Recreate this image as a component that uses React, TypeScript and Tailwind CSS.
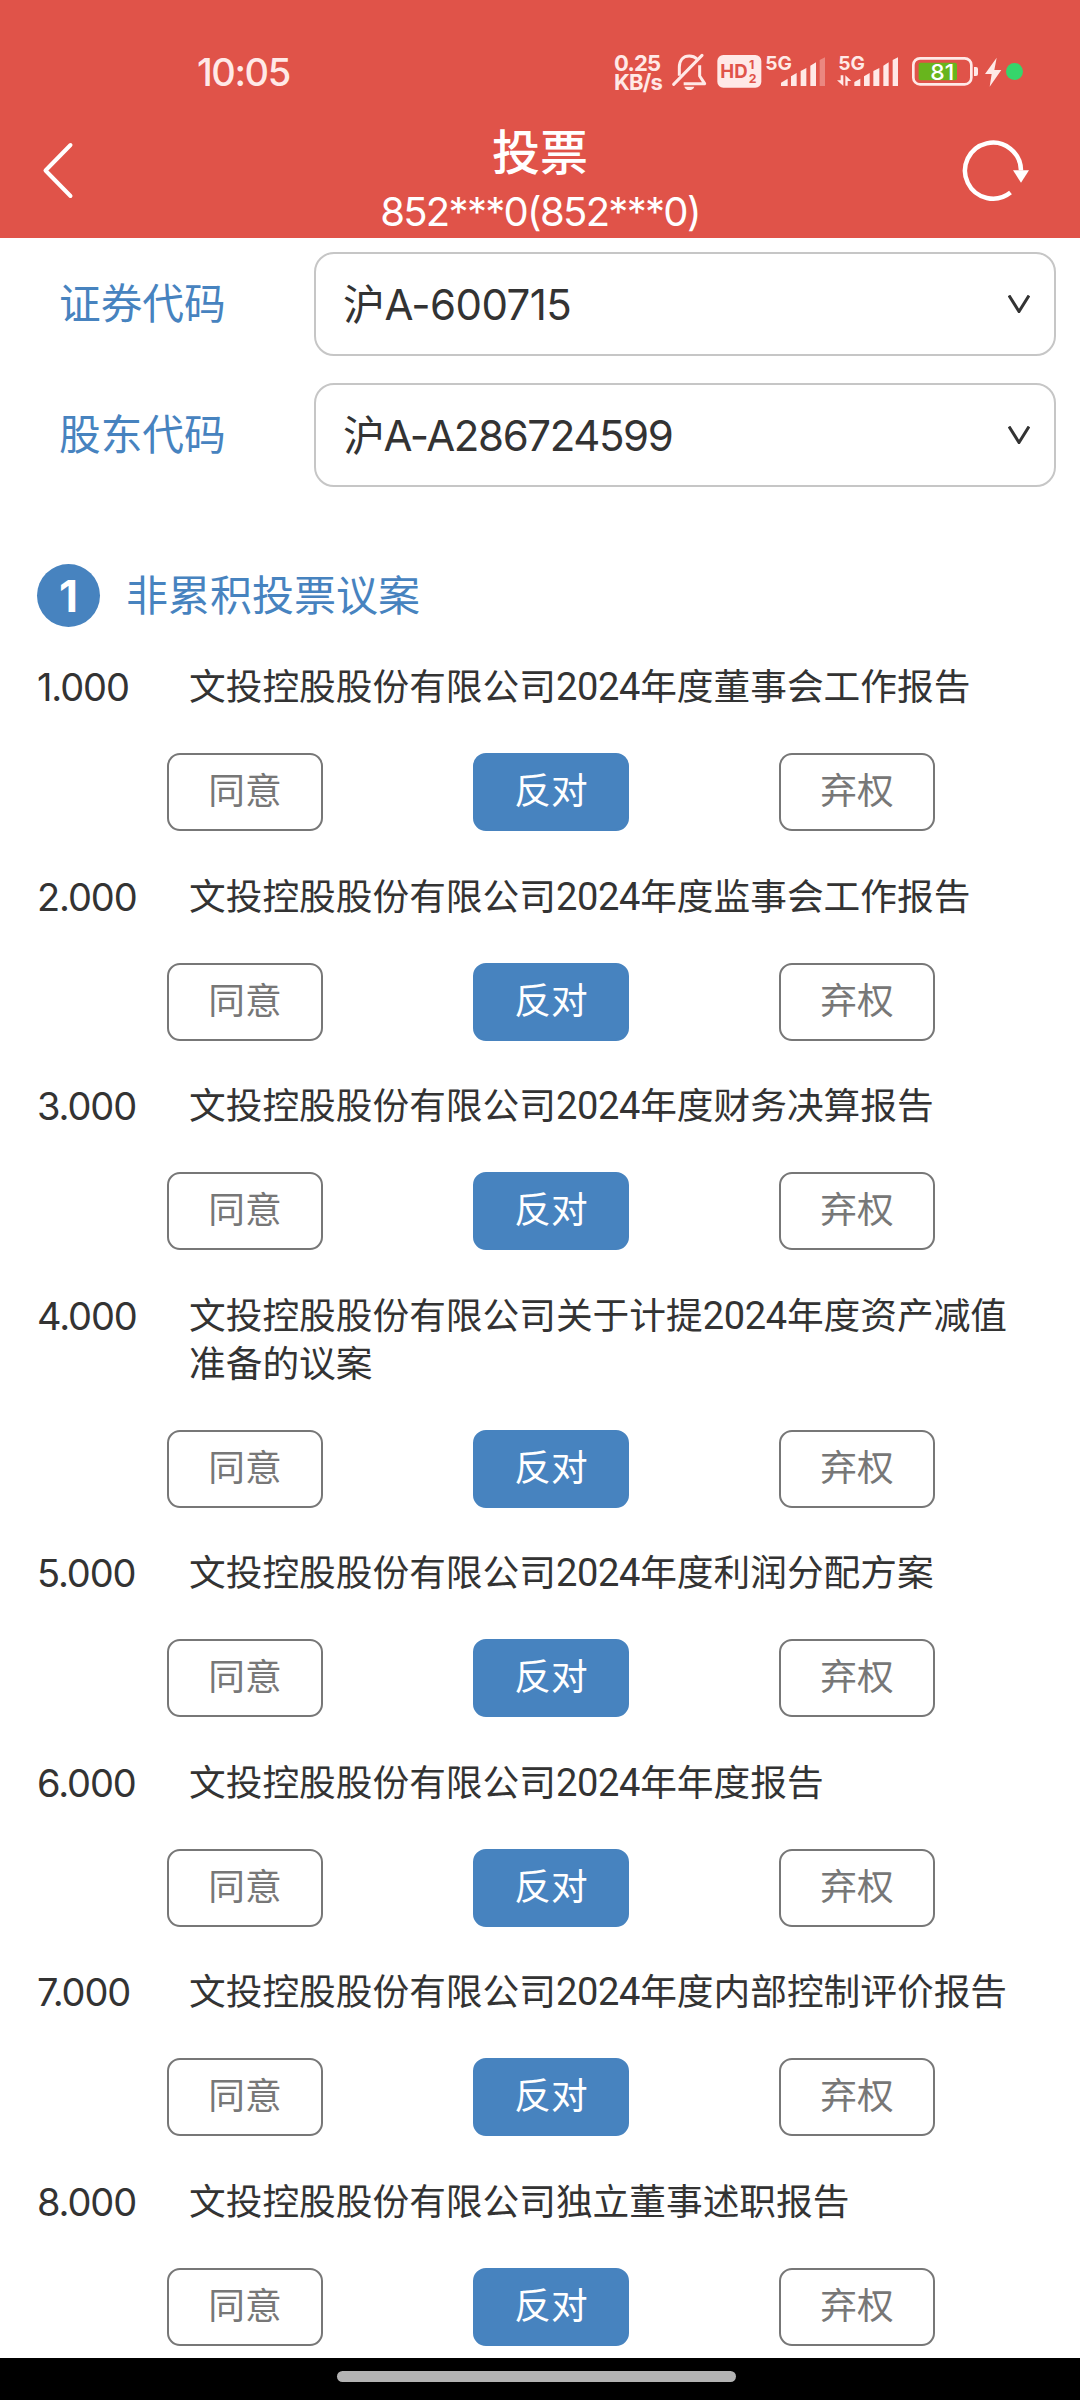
import { useState } from 'react'
import clsx from 'clsx'

type Vote = '同意' | '反对' | '弃权'

interface Proposal {
  id: string
  title: string
}

const options: Vote[] = ['同意', '反对', '弃权']

const proposals: Proposal[] = [
  { id: '1.000', title: '文投控股股份有限公司2024年度董事会工作报告' },
  { id: '2.000', title: '文投控股股份有限公司2024年度监事会工作报告' },
  { id: '3.000', title: '文投控股股份有限公司2024年度财务决算报告' },
  { id: '4.000', title: '文投控股股份有限公司关于计提2024年度资产减值准备的议案' },
  { id: '5.000', title: '文投控股股份有限公司2024年度利润分配方案' },
  { id: '6.000', title: '文投控股股份有限公司2024年年度报告' },
  { id: '7.000', title: '文投控股股份有限公司2024年度内部控制评价报告' },
  { id: '8.000', title: '文投控股股份有限公司独立董事述职报告' },
]

const StatusBar = () => (
  <div className="flex h-[112px] items-start pl-[197px] pr-[57px] pt-[52px] text-[#ffe9e7]">
    <span className="text-[38px] font-medium leading-[40px] tracking-[-1.4px]">10:05</span>
    <div className="ml-auto flex h-10 items-start">
      <div className="mr-[9px] w-[49px] whitespace-nowrap pt-[2px] text-[22px] font-bold leading-[19px] tracking-[-0.8px]">
        <div>0.25</div>
        <div>KB/s</div>
      </div>

      {/* Muted bell */}
      <svg className="h-10 w-[36px]" viewBox="213 36 108 120" fill="none" stroke="currentColor" strokeWidth="9">
        <path d="M235 107V82c0-22 12-34 30-34 10 0 18 4 23 9M296 76v32l15 23h-63" strokeLinejoin="round" />
        <path d="M218 133l85-87" strokeLinecap="round" />
        <path d="M250 140h30c-2 7-8 10-15 10s-13-3-15-10z" fill="currentColor" stroke="none" />
      </svg>

      {/* HD badge */}
      <svg className="ml-[9px] h-10 w-[46px]" viewBox="349 36 138 120">
        <rect x="350" y="45" width="132" height="98" rx="18" fill="currentColor" />
        <g fill="#e05349" fontWeight="700">
          <text x="359" y="114" fontSize="56" textLength="82" lengthAdjust="spacingAndGlyphs">HD</text>
          <text x="445" y="88" fontSize="37">1</text>
          <text x="444" y="129" fontSize="37">2</text>
        </g>
      </svg>

      {/* SIM 1 */}
      <svg className="h-10 w-[63px]" viewBox="489 36 189 120" fill="currentColor">
        <text x="496" y="90" fontSize="56" fontWeight="700" textLength="80" lengthAdjust="spacingAndGlyphs">5G</text>
        <path d="M543 138v-10l20-12v22zM573 138v-29l17-10v39zM602 138V93l17-9v54zM631 138V77l17-10v71z" />
        <path d="M659 138V60l16-8v86z" opacity=".35" />
      </svg>

      {/* SIM 2 */}
      <svg className="ml-[10px] h-10 w-[64px]" viewBox="708 36 192 120" fill="currentColor">
        <text x="715" y="90" fontSize="56" fontWeight="700" textLength="80" lengthAdjust="spacingAndGlyphs">5G</text>
        <path d="M722 106h8v32l-19-17h11zM736 106l18 17h-11v14h-7z" />
        <path d="M763 138v-12l18-10v22zM792 138v-29l17-10v39zM820 138V93l18-9v54zM850 138V77l16-10v71zM878 138V60l16-8v86z" />
      </svg>

      {/* Battery */}
      <svg className="ml-[11px] h-10 w-[68px]" viewBox="930 36 204 120">
        <rect x="937" y="55" width="174" height="78" rx="20" fill="none" stroke="currentColor" strokeWidth="8" />
        <rect x="953" y="68" width="115" height="53" rx="6" fill="#68b51d" />
        <path d="M1119 81h6q6 0 6 6v15q0 6-6 6h-6z" fill="currentColor" />
        <text x="988" y="119" fontSize="66" fontWeight="500" fill="#fff" textLength="72" lengthAdjust="spacingAndGlyphs">81</text>
      </svg>

      {/* Charging bolt */}
      <svg className="ml-[5px] h-10 w-[18px]" viewBox="1150 36 54 120" fill="currentColor">
        <path d="M1188 53l-35 49h20l-6 38 35-50h-21z" />
      </svg>
      <div className="ml-[4px] mt-[11px] size-[17px] rounded-full bg-[#36d56b]" />
    </div>
  </div>
)

const Header = () => (
  <header className="h-[238px] bg-[#e05349] text-white">
    <StatusBar />
    <div className="flex h-[126px] justify-between">
      <svg className="ml-[38px] mt-[26px] h-16 w-10" viewBox="0 0 40 64" fill="none" stroke="currentColor" strokeWidth="4" strokeLinecap="round" strokeLinejoin="round">
        <path d="M32.5 7L7.5 32.5l25 25.500" />
      </svg>
      <div className="ml-[42px] flex flex-col items-center whitespace-nowrap">
        <h1 className="mt-[13px] text-[48px] font-medium leading-[56px]">投票</h1>
        <p className="mt-px text-[40px] leading-[60px] tracking-[-1.7px]">852***0(852***0)</p>
      </div>
      <svg className="mr-[45px] mt-[24px] h-[70px] w-[75px]" viewBox="0 0 75 70">
        <path d="M61 34.500A28 28 0 1 0 50.500 56.500" fill="none" stroke="currentColor" strokeWidth="4.500" />
        <path d="M53 34.300h16l-8 12.500z" fill="currentColor" />
      </svg>
    </div>
  </header>
)

interface SelectFieldProps {
  label: string
  value: string
  valueClass?: string
}

const SelectField = ({ label, value, valueClass }: SelectFieldProps) => (
  <div className="flex h-[104px] items-center">
    <label className="w-[255px] text-[41.700px] leading-[60px] text-[#4783bf]">{label}</label>
    <div className="flex h-full w-[742px] items-center justify-between rounded-[20px] border-2 border-[#c6c6c6] pl-[27px] pr-[24px]">
      <span className={clsx('mt-[2px] text-[42px] leading-[60px]', valueClass)}>{value}</span>
      <svg className="h-[18px] w-[22px]" viewBox="0 0 22 18" fill="none" stroke="currentColor" strokeWidth="3">
        <path d="M1 0.500l10 16 10-16" />
      </svg>
    </div>
  </div>
)

// Figures inside a title are set slightly narrower than the row numbers
const Title = ({ text }: { text: string }) => (
  <p className="w-[830px] text-[36.7px]">
    {text.split(/(\d+)/).map((part, i) =>
      /\d/.test(part) ? (
        <span key={i} className="font-['Roboto',sans-serif] text-[38px] tracking-[-0.3px]">{part}</span>
      ) : (
        part
      )
    )}
  </p>
)

const App = () => {
  const [votes, setVotes] = useState<Record<string, Vote>>({})

  return (
    <div className="flex h-[2400px] w-[1080px] flex-col overflow-hidden bg-white font-['Inter','Noto_Sans_CJK_SC',sans-serif] text-[#333]">
      <Header />

      <main className="min-h-0 flex-1 overflow-hidden">
        <div className="flex flex-col gap-[27px] pl-[59px] pt-[14px]">
          <SelectField label="证券代码" value="沪A-600715" valueClass="tracking-[-0.600px]" />
          <SelectField label="股东代码" value="沪A-A286724599" valueClass="tracking-[-1.400px]" />
        </div>

        <div className="mt-[77px] flex h-[63px] items-center pl-[37px]">
          <span className="flex size-[63px] items-center justify-center rounded-full bg-[#4783bf] text-[44px] font-bold leading-none text-white">
            1
          </span>
          <h2 className="ml-[26px] text-[42px] leading-[60px] text-[#4783bf]">非累积投票议案</h2>
        </div>

        <div className="pt-[36px]">
          {proposals.map(({ id, title }) => (
            <section key={id} className="pb-[41.5px]">
              <div className="flex pl-[37px] leading-[48px]">
                <span className="w-[152px] text-[38px] tracking-[-1.1px]">{id}</span>
                <Title text={title} />
              </div>
              <div className="mt-[42px] flex gap-[150px] pl-[167px]">
                {options.map(option => (
                  <button
                    key={option}
                    onClick={() => setVotes({ ...votes, [id]: option })}
                    className={clsx(
                      'h-[78px] w-[156px] rounded-[13px] border-2 pb-0.5 text-[36.7px] leading-[60px]',
                      (votes[id] ?? '反对') === option
                        ? 'border-[#4783bf] bg-[#4783bf] text-white'
                        : 'border-[#777] text-[#777]'
                    )}
                  >
                    {option}
                  </button>
                ))}
              </div>
            </section>
          ))}
        </div>
      </main>

      <footer className="flex h-[42px] shrink-0 bg-black pl-[337px] pt-[13px]">
        <div className="h-[11px] w-[399px] rounded-full bg-[#b3b3b3]" />
      </footer>
    </div>
  )
}

export default App
